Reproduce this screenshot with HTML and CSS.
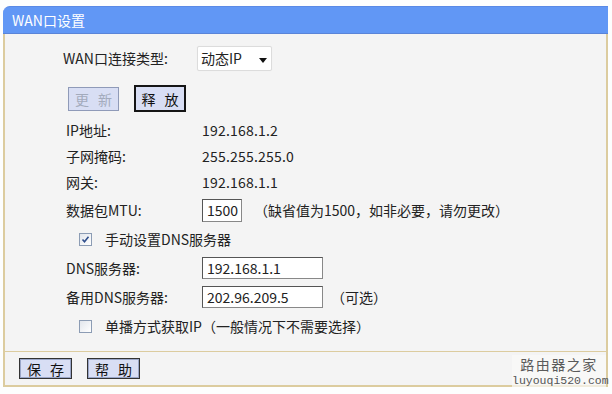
FILE: index.html
```html
<!DOCTYPE html>
<html>
<head>
<meta charset="utf-8">
<link rel="stylesheet" href="styles.css">
</head>
<body>
<div class="panel">
  <div class="header">WAN口设置</div>
  <div class="body">
    <div class="content">
      <div class="row row-type">
        <span class="label label-type">WAN口连接类型:</span>
        <span class="select">动态IP<span class="arrow"></span></span>
      </div>
      <div class="row row-btns">
        <span class="btn btn-disabled">更 新</span>
        <span class="btn btn-active">释 放</span>
      </div>
      <div class="row r26"><span class="label">IP地址:</span><span class="val">192.168.1.2</span></div>
      <div class="row r26"><span class="label">子网掩码:</span><span class="val">255.255.255.0</span></div>
      <div class="row r26"><span class="label">网关:</span><span class="val">192.168.1.1</span></div>
      <div class="row r30">
        <span class="label">数据包MTU:</span>
        <span class="input input-mtu">1500</span>
        <span class="note">（缺省值为1500，如非必要，请勿更改）</span>
      </div>
      <div class="row r28 check-row">
        <span class="check checked"><svg viewBox="0 0 11 11" width="11" height="11"><path d="M2.5 5.5 L4.5 7.8 L8.5 2.8" fill="none" stroke="#2f4e8c" stroke-width="1.6"/></svg></span>
        <span class="check-label">手动设置DNS服务器</span>
      </div>
      <div class="row r29">
        <span class="label">DNS服务器:</span>
        <span class="input input-dns">192.168.1.1</span>
      </div>
      <div class="row r29">
        <span class="label">备用DNS服务器:</span>
        <span class="input input-dns">202.96.209.5</span>
        <span class="note note-opt">（可选）</span>
      </div>
      <div class="row r30 check-row">
        <span class="check"></span>
        <span class="check-label">单播方式获取IP（一般情况下不需要选择）</span>
      </div>
    </div>
    <div class="footer">
      <span class="btn btn-foot">保 存</span>
      <span class="btn btn-foot">帮 助</span>
    </div>
  </div>
  <div class="watermark">
    <div class="wm-cn">路由器之家</div>
    <div class="wm-en">luyouqi520.com</div>
  </div>
</div>
</body>
</html>
```

FILE: styles.css
```css
html, body {
  margin: 0;
  padding: 0;
  background: #fdfefe;
}
body {
  font-family: "Noto Sans CJK SC", "DejaVu Sans", sans-serif;
  font-size: 14px;
  color: #222;
  width: 612px;
  height: 394px;
  overflow: hidden;
}
.panel {
  position: relative;
  margin: 6px 4px 0 3px;
  width: 605px;
}
.header {
  height: 28px;
  box-sizing: border-box;
  background: #6197f5;
  border-top: 1px solid #5a8ae6;
  border-bottom: 1px solid #5a84d8;
  border-top-left-radius: 7px;
  color: #fff;
  font-size: 14px;
  line-height: 26px;
  padding-left: 9px;
}
.body {
  background: #f4f4f4;
  border-left: 2px solid #dccc9f;
  border-right: 2px solid #dccc9f;
  border-bottom: 2px solid #dccc9f;
}
.content {
  padding: 10px 0 10px 61px;
  border-bottom: 1px solid #dccc9f;
}
.row {
  display: flex;
  align-items: center;
  line-height: 16px;
}
.label {
  width: 136px;
  flex: none;
}
.label-type {
  width: 134px;
}
.row-type {
  height: 28px;
  margin-left: -3px;
}
.select {
  box-sizing: border-box;
  width: 75px;
  height: 25px;
  background: #fff;
  border: 1px solid #dcdcdc;
  border-radius: 2px;
  box-shadow: 0 0 1px #e8e8e8;
  display: flex;
  align-items: center;
  padding-left: 3px;
  position: relative;
}
.arrow {
  position: absolute;
  left: 61px;
  top: 11px;
  width: 0;
  height: 0;
  border-left: 4px solid transparent;
  border-right: 4px solid transparent;
  border-top: 5px solid #111;
}
.row-btns {
  height: 27px;
  margin-top: 13px;
  margin-bottom: 5px;
  gap: 15px;
  padding-left: 2px;
}
.btn {
  box-sizing: border-box;
  display: inline-flex;
  align-items: center;
  justify-content: center;
  background: #d8def4;
  font-size: 14px;
  white-space: pre;
  letter-spacing: 3px;
  text-indent: 3px;
}
.btn-disabled {
  width: 51px;
  height: 24px;
  border: 1px solid #8f9ab8;
  color: #a3abbc;
}
.btn-active {
  width: 52px;
  height: 27px;
  border: 2px solid #151515;
  color: #111;
}
.r26 { height: 26px; }
.r28 { height: 28px; }
.r29 { height: 29px; }
.r30 { height: 30px; }
.val {
  letter-spacing: 0.2px;
}
.input {
  box-sizing: border-box;
  background: #fff;
  border: 1px solid #555;
  border-right-color: #888;
  border-bottom-color: #888;
  display: flex;
  align-items: center;
  padding-left: 4px;
}
.input-mtu {
  width: 40px;
  height: 23px;
}
.input-dns {
  width: 121px;
  height: 22px;
}
.note {
  margin-left: 12px;
}
.note-opt {
  margin-left: 8px;
}
.check-row {
  padding-left: 13px;
}
.check {
  box-sizing: border-box;
  width: 13px;
  height: 13px;
  border: 1px solid #8c9cb4;
  background: linear-gradient(135deg, #e2e6ec, #ffffff);
  display: flex;
  align-items: center;
  justify-content: center;
  flex: none;
}
.check-label {
  margin-left: 13px;
}
.footer {
  height: 33px;
  display: flex;
  align-items: center;
  gap: 15px;
  padding-left: 14px;
}
.btn-foot {
  width: 53px;
  height: 21px;
  border: 1px solid #333;
  box-shadow: inset 0 0 0 1px #9aa6c8;
  color: #111;
}
.watermark {
  position: absolute;
  right: 2px;
  bottom: 0;
  width: 94px;
  text-align: center;
  color: #555;
  background: rgba(250, 250, 248, 0.7);
}
.wm-cn {
  font-family: "Noto Sans CJK SC", serif;
  font-size: 14px;
  line-height: 19px;
  letter-spacing: 1.5px;
  color: #5a5a5a;
}
.wm-en {
  font-family: "Liberation Mono", monospace;
  font-size: 11.5px;
  line-height: 13px;
  color: #555;
}
```
